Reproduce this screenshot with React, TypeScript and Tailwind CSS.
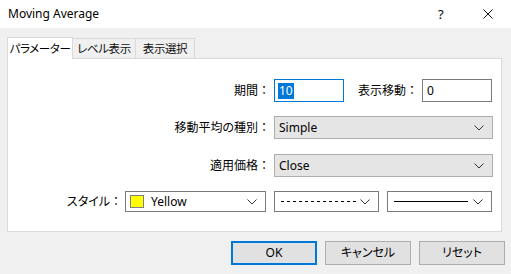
import React from 'react';

const font = { fontFamily: "'Noto Sans', 'Noto Sans CJK JP', sans-serif" };

function Chevron() {
    return (
        <svg width="10" height="6" viewBox="0 0 10 6" className="shrink-0">
            <polyline points="0.5,0.5 5,5 9.5,0.5" fill="none" stroke="#333" strokeWidth="1" />
        </svg>
    );
}

function Label({ width, text }: { width: string; text: string }) {
    return (
        <div className={`${width} text-right`}>
            {text}
            <span className="[font-feature-settings:normal]">：</span>
        </div>
    );
}

function Select({ width, children, flat }: { width: string; children: React.ReactNode; flat?: boolean }) {
    return (
        <div
            className={`${width} ${flat ? 'h-[21px] bg-white border-[#7a7a7a]' : 'h-[23px] bg-[#e5e5e5] border-[#adadad]'} border flex items-center pl-[4px] pr-[8px]`}
        >
            <div className="flex-1 flex items-center min-w-0 whitespace-nowrap">{children}</div>
            <Chevron />
        </div>
    );
}

export default function App() {
    return (
        <div
            className="w-[511px] h-[274px] bg-[#f0f0f0] flex flex-col text-[12px] text-black overflow-hidden whitespace-nowrap [font-feature-settings:'palt']"
            style={font}
        >
            {/* title bar */}
            <div className="h-[28px] bg-white flex items-center pl-[8px] shrink-0">
                <span className="flex-1 leading-none">Moving Average</span>
                <span className="w-[8px] text-[13px] leading-none mr-[37px]">?</span>
                <svg width="10" height="10" viewBox="0 0 10 10" className="mr-[18px]">
                    <path d="M0.5 0.5 L9.5 9.5 M9.5 0.5 L0.5 9.5" stroke="#111" strokeWidth="1" />
                </svg>
            </div>

            <div className="pl-[7px] pt-[9px]">
                {/* tabs */}
                <div className="flex items-end h-[21px] text-[11.5px] tracking-[-0.4px]">
                    <div className="w-[66px] h-[22px] mb-[-1px] relative z-10 bg-white border-l border-t border-r border-[#d9d9d9] flex items-center justify-center">
                        パラメーター
                    </div>
                    <div className="w-[63px] h-[20px] border-t border-r border-[#d9d9d9] flex items-center justify-center text-[#111]">
                        レベル表示
                    </div>
                    <div className="w-[59px] h-[20px] border-t border-r border-[#d9d9d9] flex items-center justify-center text-[#111]">
                        表示選択
                    </div>
                </div>

                {/* panel */}
                <div className="w-[495px] h-[174px] bg-white border border-[#d9d9d9] pt-[20px] flex flex-col">
                    <div className="flex items-center h-[23px]">
                        <Label width="w-[262px]" text="期間" />
                        <div className="ml-[4px] w-[70px] h-[23px] border border-[#0078d7] flex items-center pl-[3px]">
                            <span className="bg-[#0078d7] text-white px-[1px] leading-[16px]">10</span>
                        </div>
                        <Label width="w-[74px]" text="表示移動" />
                        <div className="ml-[4px] w-[70px] h-[23px] border border-[#7a7a7a] flex items-center pl-[4px]">0</div>
                    </div>

                    <div className="flex items-center h-[23px] mt-[14px]">
                        <Label width="w-[262px]" text="移動平均の種別" />
                        <div className="ml-[4px]">
                            <Select width="w-[219px]">Simple</Select>
                        </div>
                    </div>

                    <div className="flex items-center h-[23px] mt-[15px]">
                        <Label width="w-[262px]" text="適用価格" />
                        <div className="ml-[4px]">
                            <Select width="w-[219px]">Close</Select>
                        </div>
                    </div>

                    <div className="flex items-center h-[21px] mt-[14px]">
                        <Label width="w-[114px]" text="スタイル" />
                        <div className="ml-[3px]">
                            <Select width="w-[141px]" flat>
                                <span className="w-[14px] h-[13px] bg-[#ffff00] border border-[#808080] mr-[7px]" />
                                Yellow
                            </Select>
                        </div>
                        <div className="ml-[8px]">
                            <Select width="w-[105px]" flat>
                                <svg width="76" height="3" viewBox="0 0 76 3" className="ml-[2px]">
                                    <line x1="0" y1="1.5" x2="76" y2="1.5" stroke="#000" strokeWidth="1" strokeDasharray="3 3" />
                                </svg>
                            </Select>
                        </div>
                        <div className="ml-[8px]">
                            <Select width="w-[105px]" flat>
                                <div className="w-[74px] ml-[2px] border-t border-black" />
                            </Select>
                        </div>
                    </div>
                </div>
            </div>

            {/* buttons */}
            <div className="flex justify-end gap-[8px] pr-[6px] mt-[9px]">
                <button className="w-[86px] h-[24px] bg-[#e1e1e1] border-2 border-[#0078d7] flex items-center justify-center">
                    OK
                </button>
                <button className="w-[86px] h-[24px] bg-[#e1e1e1] border border-[#adadad] flex items-center justify-center">
                    キャンセル
                </button>
                <button className="w-[86px] h-[24px] bg-[#e1e1e1] border border-[#adadad] flex items-center justify-center">
                    リセット
                </button>
            </div>
        </div>
    );
}
